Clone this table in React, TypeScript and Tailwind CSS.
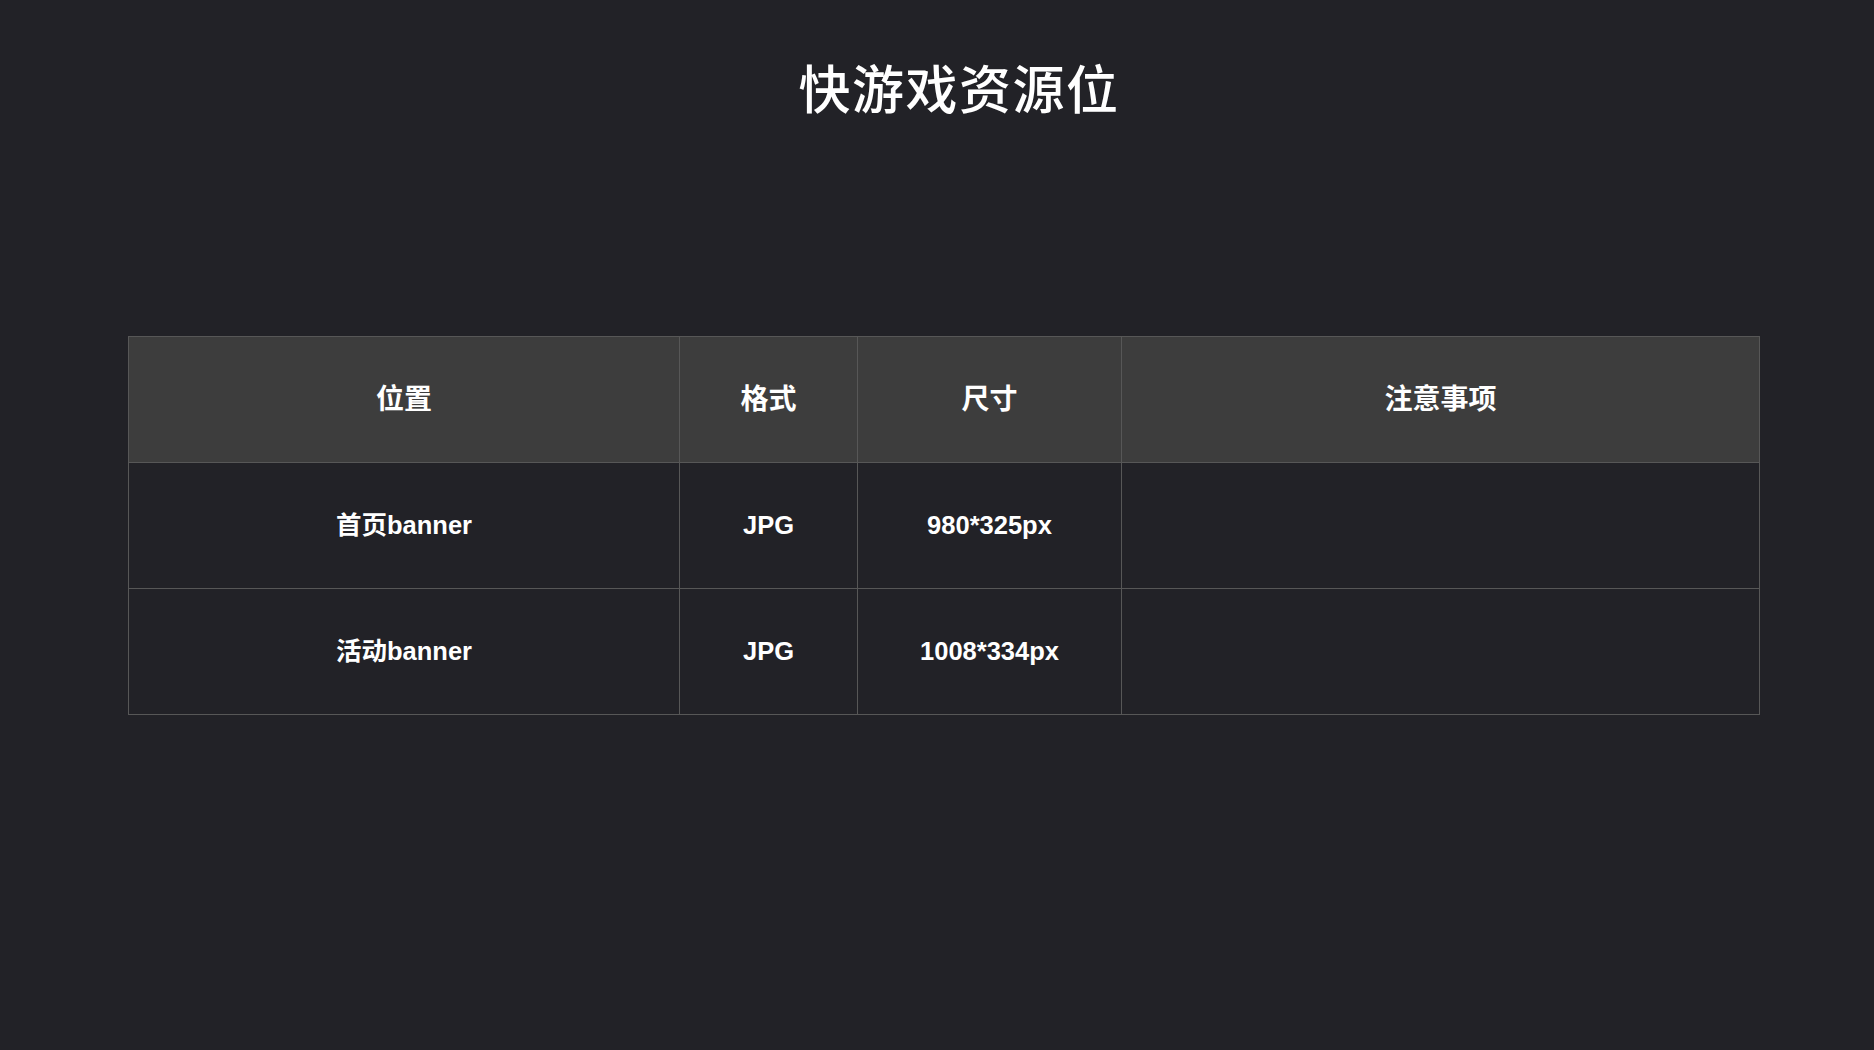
const rows = [
  { pos: "首页banner", fmt: "JPG", size: "980*325px", note: "" },
  { pos: "活动banner", fmt: "JPG", size: "1008*334px", note: "" },
];

const headers = ["位置", "格式", "尺寸", "注意事项"];

export default function App() {
  return (
    <div className="min-h-[1050px] w-full bg-[#222227] text-white">
      <div className="flex justify-center pt-[61px] pl-[44px]">
        <h1 className="text-[52px] leading-[52px] font-medium tracking-[1.5px] [font-family:'Noto_Sans_CJK_SC',sans-serif]">
          快游戏资源位
        </h1>
      </div>
      <div className="pl-[128px] pt-[223px]">
        <table className="border-collapse [font-family:'Liberation_Sans','Noto_Sans_CJK_SC',sans-serif] font-bold">
          <thead>
            <tr className="bg-[#3d3d3d] h-[126px]">
              {headers.map((h, i) => (
                <th
                  key={h}
                  className={
                    "border border-[#575757] text-[28px] font-bold text-center p-0 " +
                    (i === 0 ? "w-[551px]" : i === 1 ? "w-[178px]" : i === 2 ? "w-[264px]" : "w-[638px]")
                  }
                >
                  {h}
                </th>
              ))}
            </tr>
          </thead>
          <tbody>
            {rows.map((r) => (
              <tr key={r.pos} className="h-[126px]">
                <td className="border border-[#575757] text-[25.5px] text-center p-0">{r.pos}</td>
                <td className="border border-[#575757] text-[25.5px] text-center p-0">{r.fmt}</td>
                <td className="border border-[#575757] text-[25.5px] text-center p-0">{r.size}</td>
                <td className="border border-[#575757] text-[25.5px] text-center p-0">{r.note}</td>
              </tr>
            ))}
          </tbody>
        </table>
      </div>
    </div>
  );
}
